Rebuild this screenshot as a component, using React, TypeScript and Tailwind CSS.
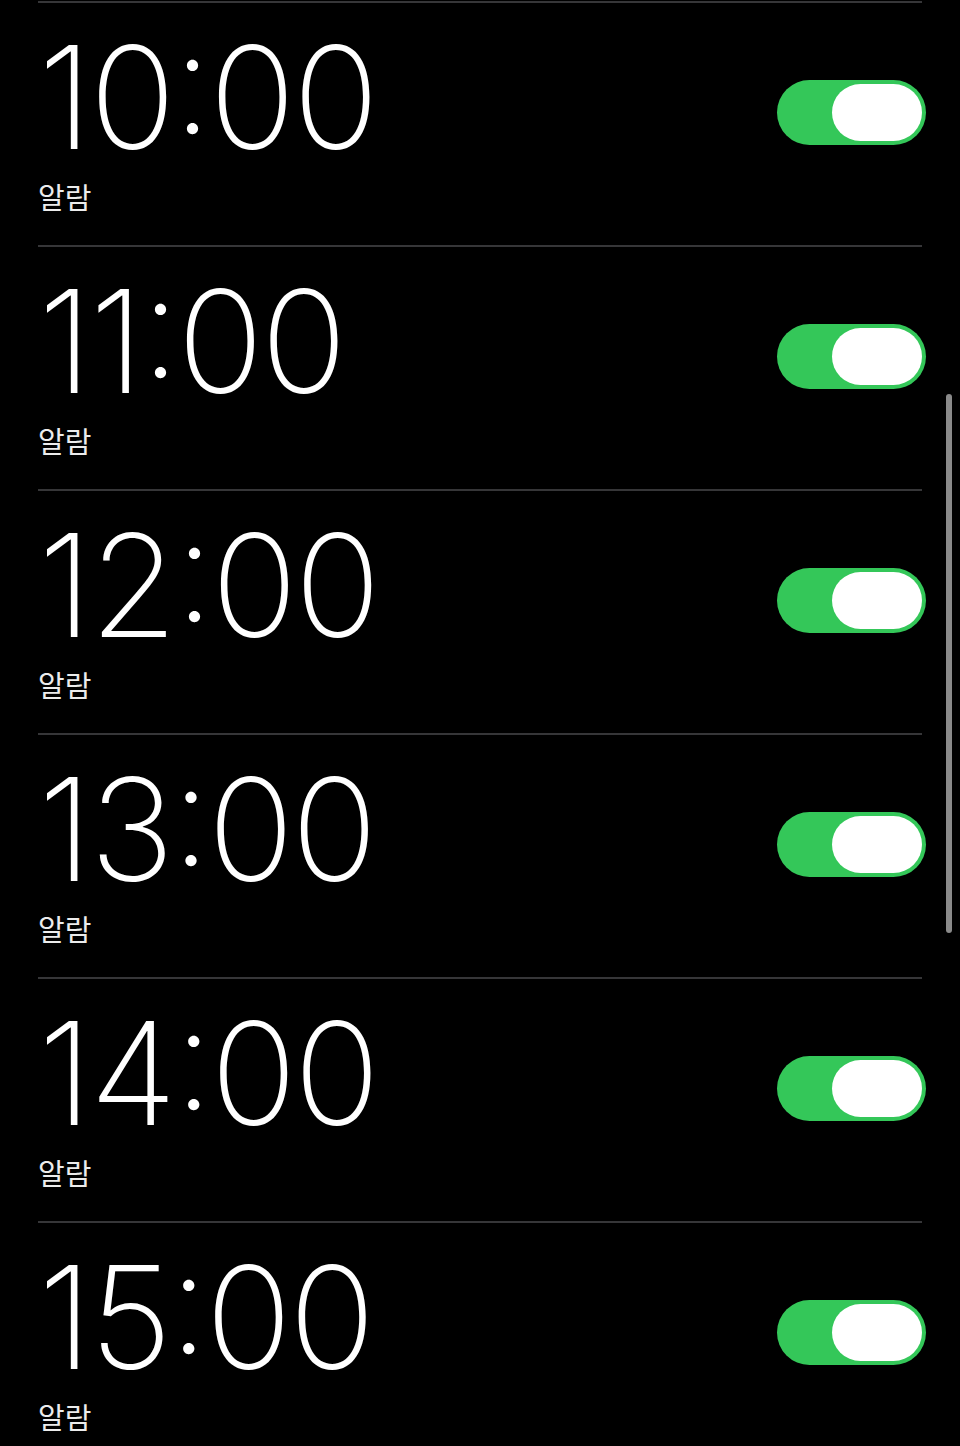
const alarms = ['10:00', '11:00', '12:00', '13:00', '14:00', '15:00'];

function Toggle() {
  return (
    <div className="flex h-[65px] w-[149px] shrink-0 items-center justify-end rounded-full bg-[#34c759] p-[4px]">
      <div className="h-[57px] w-[90px] rounded-full bg-white shadow-[0_0_0_1px_rgba(52,199,89,0.4)]" />
    </div>
  );
}

function AlarmRow({ time }: { time: string }) {
  return (
    <div className="ml-[38px] h-[244px] w-[884px] shrink-0 border-t-2 border-[#363638]">
      <div className="flex items-start justify-between">
        <div className="pt-[34px]">
          <div
            className="h-[120px] text-[143px] font-extralight leading-[120px] tracking-[-3px] text-white [font-feature-settings:'case']"
            style={{ fontFamily: 'Inter, "Noto Sans", sans-serif' }}
          >
            {time}
          </div>
          <div
            className="mt-[23px] text-[29px] leading-[32px] text-[#ececec]"
            style={{ fontFamily: '"Noto Sans CJK KR", "Noto Sans", sans-serif' }}
          >
            알람
          </div>
        </div>
        <div className="mr-[-4px] pt-[77px]">
          <Toggle />
        </div>
      </div>
    </div>
  );
}

export default function App() {
  return (
    <div className="relative flex h-[1446px] w-[960px] flex-col overflow-hidden bg-black pt-[1px]">
      {alarms.map(t => (
        <AlarmRow key={t} time={t} />
      ))}
      <div className="absolute left-[946px] top-[394px] h-[539px] w-[6px] rounded-full bg-[#8a8a8a]" />
    </div>
  );
}
